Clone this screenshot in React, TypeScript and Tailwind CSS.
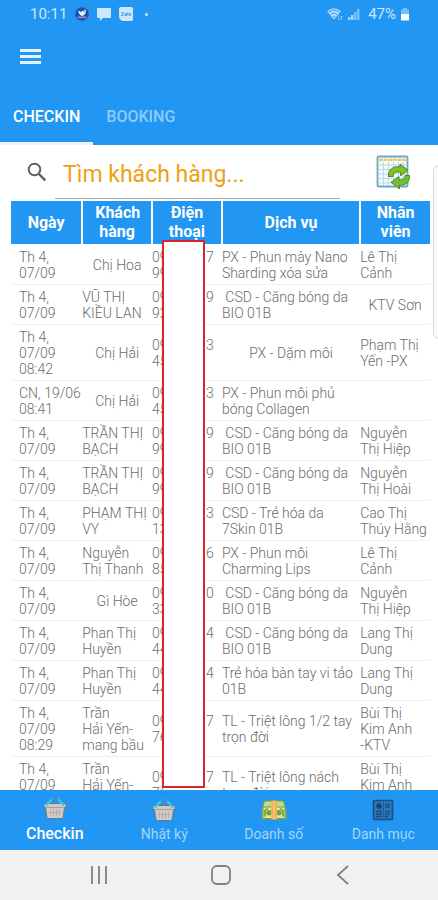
import React, { useState } from "react";
import clsx from "clsx";

interface Visit {
  date: string;
  customer: string;
  phone: string[];
  service: string;
  staff: string;
}

const visits: Visit[] = [
  { date: "Th 4,\n07/09", customer: "Chị Hoa", phone: ["09", "7", "99"], service: "PX - Phun mày Nano\nSharding xóa sửa", staff: "Lê Thị\nCảnh" },
  { date: "Th 4,\n07/09", customer: "VŨ THỊ\nKIỀU LAN", phone: ["09", "9", "92"], service: "\u00a0CSD - Căng bóng da\nBIO 01B", staff: "KTV Sơn" },
  { date: "Th 4,\n07/09\n08:42", customer: "Chị Hải", phone: ["09", "3", "45"], service: "PX - Dặm môi", staff: "Phạm Thị\nYến -PX" },
  { date: "CN, 19/06\n08:41", customer: "Chị Hải", phone: ["09", "3", "45"], service: "PX - Phun môi phủ\nbóng Collagen", staff: "" },
  { date: "Th 4,\n07/09", customer: "TRẦN THỊ\nBẠCH", phone: ["09", "9", "99"], service: "\u00a0CSD - Căng bóng da\nBIO 01B", staff: "Nguyễn\nThị Hiệp" },
  { date: "Th 4,\n07/09", customer: "TRẦN THỊ\nBẠCH", phone: ["09", "9", "99"], service: "\u00a0CSD - Căng bóng da\nBIO 01B", staff: "Nguyễn\nThị Hoài" },
  { date: "Th 4,\n07/09", customer: "PHẠM THỊ\nVY", phone: ["09", "3", "13"], service: "CSD - Trẻ hóa da\n7Skin 01B", staff: "Cao Thị\nThúy Hằng" },
  { date: "Th 4,\n07/09", customer: "Nguyễn\nThị Thanh", phone: ["09", "6", "85"], service: "PX - Phun môi\nCharming Lips", staff: "Lê Thị\nCảnh" },
  { date: "Th 4,\n07/09", customer: "Gì Hòe", phone: ["09", "0", "33"], service: "\u00a0CSD - Căng bóng da\nBIO 01B", staff: "Nguyễn\nThị Hiệp" },
  { date: "Th 4,\n07/09", customer: "Phan Thị\nHuyền", phone: ["09", "4", "44"], service: "\u00a0CSD - Căng bóng da\nBIO 01B", staff: "Lang Thị\nDung" },
  { date: "Th 4,\n07/09", customer: "Phan Thị\nHuyền", phone: ["09", "4", "44"], service: "Trẻ hóa bàn tay vi tảo\n01B", staff: "Lang Thị\nDung" },
  { date: "Th 4,\n07/09\n08:29", customer: "Trần\nHải Yến-\nmang bầu", phone: ["09", "7", "76"], service: "TL - Triệt lông 1/2 tay\ntrọn đời", staff: "Bùi Thị\nKim Anh\n-KTV" },
  { date: "Th 4,\n07/09\n08:29", customer: "Trần\nHải Yến-\nmang bầu", phone: ["09", "7", "76"], service: "TL - Triệt lông nách\ntrọn đời", staff: "Bùi Thị\nKim Anh\n-KTV" },
];

const columns = ["Ngày", "Khách hàng", "Điện thoại", "Dịch vụ", "Nhân viên"];

function StatusBar() {
  return (
    <div className="flex h-7 shrink-0 items-center justify-between pl-[30px] pr-7 text-[#cbe6fd]">
      <div className="flex items-center gap-2">
        <span className="text-[15px] leading-5">10:11</span>
        <svg width="14" height="14" viewBox="0 0 14 14" aria-hidden="true">
          <circle cx="7" cy="7" r="6.8" fill="#1454b8" />
          <path d="M3 3.5l3 1.5 1.5-1.2 1.5 1 2-2.3-.6 4-2.2 2.3H6L4 6.5z" fill="#e8f4ff" />
          <path d="M8.5 3.5l2-1.5v3l-1.5 1z" fill="#f3c73b" />
          <path d="M2.5 10.3h9" stroke="#b98aa5" strokeWidth="1.6" />
        </svg>
        <svg width="14" height="14" viewBox="0 0 14 14" aria-hidden="true">
          <path d="M1 1h12a1 1 0 011 1v8a1 1 0 01-1 1H6l-3 3v-3H1a1 1 0 01-1-1V2a1 1 0 011-1z" fill="currentColor" />
        </svg>
        <svg width="14" height="14" viewBox="0 0 14 14" aria-hidden="true">
          <path d="M2 0h10.500A1.500 1.500 0 0114 1.500v11a1.500 1.500 0 01-1.500 1.500H5c-3 0-5-2-5-5V2a2 2 0 012-2z" fill="currentColor" />
          <path d="M2.500 5.500h2l-2 3h2.200M6 8.500v-2h1.500v2H6M8.800 5.200v3.300M10.200 6.500h1.500v2h-1.500z" fill="none" stroke="#5a9fd8" />
        </svg>
        <span className="ml-1 size-[3px] rounded-full bg-current" />
      </div>
      <div className="flex items-center gap-1">
        <svg width="17" height="14" viewBox="0 0 17 14" fill="none" stroke="currentColor" aria-hidden="true">
          <path d="M.7 4.300a9.500 9.500 0 0112.600 0L7 12z" fill="currentColor" fillOpacity=".35" strokeWidth="1" />
          <path d="M2.800 6.300a6.500 6.500 0 018.400 0M4.800 8.600a3.500 3.500 0 014.400 0" strokeWidth="1.300" />
          <path d="M12 9v4l-1.200-1.200M14.500 13V9l1.200 1.200" strokeOpacity=".6" />
        </svg>
        <svg width="12" height="12" viewBox="0 0 12 12" fill="currentColor" aria-hidden="true">
          <path d="M0 9h2.500v3H0zM3 7h2.500v5H3z" opacity=".8" />
          <path d="M6 4h2.500v8H6zM9 1h2.500v11H9z" opacity=".55" />
        </svg>
        <span className="ml-1 text-[15px] leading-5">47%</span>
        <svg width="10" height="13" viewBox="0 0 10 13" fill="currentColor" aria-hidden="true">
          <path d="M3 0h4v1.500h2V6H1V1.500h2z" opacity=".5" />
          <path d="M1 6h8v6.500H1z" fill="#fff" />
        </svg>
      </div>
    </div>
  );
}

function CalendarSyncIcon() {
  return (
    <svg width="34" height="34" viewBox="0 0 34 34" aria-hidden="true">
      <rect x="1.500" y="1.500" width="30" height="30" rx="1" fill="#f3fafe" stroke="#6fa9bf" strokeWidth="1.800" />
      <path d="M3 4.800h27" stroke="#ecc873" strokeWidth="2.600" strokeDasharray="4 .6" />
      <path d="M3 10h27M3 14.500h27M3 19h27M3 23.500h27M3 28h27M7.500 7v23M12.500 7v23M17.500 7v23M22.500 7v23M27 7v23" stroke="#b9d9e8" />
      <path d="M12.500 21.500c-.5-7 5-11 11.500-9.500V9l8 6.300-7.500 5.500v-3.500c-4-1-7.500.5-7.500 4.200z" fill="#7fc02c" stroke="#4d8a1b" />
      <path d="M33.500 20.500c.5 6.500-4 10.200-10 9.700V34l-8.500-6.800 8-5.700v3.300c3.500.6 5.500-1 6-4.300z" fill="#76bb3a" stroke="#4d8a1b" />
    </svg>
  );
}

function BasketIcon() {
  return (
    <svg width="24" height="24" viewBox="0 0 24 24" aria-hidden="true">
      <path d="M1 7.500h22v4h-1.500l-1.300 9.500a1.800 1.800 0 01-1.800 1.500H5.600A1.800 1.800 0 013.800 21L2.500 11.500H1z" fill="#cfcbc8" stroke="#75777e" />
      <path d="M3.500 11.500h17" stroke="#a5a19e" />
      <path d="M7.500 13.500v6M10.500 13.500v6.500M13.500 13.500v6.500M16.500 13.500v6M6 16.500h12" stroke="#b3aeaa" />
      <path d="M9.500 2.500L3.500 9M14.500 2.500l6 6.500" stroke="#45c6f0" strokeWidth="2.400" strokeLinecap="round" />
      <path d="M8.500 3.300c2-1.800 5-1.800 7 0" fill="none" stroke="#4c86b5" strokeWidth="1.600" />
    </svg>
  );
}

function MoneyIcon() {
  return (
    <svg width="26" height="24" viewBox="0 0 26 24" aria-hidden="true">
      <path d="M3.500 3h19l2.500 9v9H1v-9z" fill="#c4dc86" stroke="#79a349" />
      <rect x="2" y="9" width="22" height="11.500" rx="1" fill="#dcea9d" stroke="#6d9d40" />
      <path d="M4 18.500v-6l3-2M22 18.500v-6l-3-2" fill="none" stroke="#5f9b3e" strokeWidth="1.500" />
      <circle cx="8" cy="14.800" r="2.700" fill="#6da545" />
      <circle cx="18" cy="14.800" r="2.700" fill="#6da545" />
      <path d="M10.500 2.500h5l.5 7v12h-6v-12z" fill="#f5b04e" />
      <path d="M13 3v18" stroke="#fbd79a" />
    </svg>
  );
}

function CatalogIcon() {
  return (
    <svg width="24" height="24" viewBox="0 0 24 24" fill="none" stroke="#19507f" aria-hidden="true">
      <rect x="2.500" y="2.500" width="19" height="19" rx="1" fill="#2a78bb" strokeWidth="1.600" />
      <circle cx="8" cy="8" r="2.500" fill="#19456f" />
      <path d="M5 13.500h6M5 16h6M5 18.500h6M14 6.500h5M14 9h5M14 13.500h5M14 16h5M14 18.500h3" strokeWidth="1.400" />
      <path d="M12.500 4v16" strokeOpacity=".6" />
    </svg>
  );
}

const menu = [
  { label: "Checkin", icon: <BasketIcon /> },
  { label: "Nhật ký", icon: <BasketIcon /> },
  { label: "Doanh số", icon: <MoneyIcon /> },
  { label: "Danh mục", icon: <CatalogIcon /> },
];

function Cell({ text }: { text: string }) {
  return (
    <td
      className={clsx(
        "whitespace-pre-line px-0 pt-1 pb-[3px] align-middle",
        text.includes("\n") ? "text-left" : "text-center"
      )}
    >
      {text}
    </td>
  );
}

function VisitTable() {
  return (
    <table className="w-full table-fixed border-collapse">
      <colgroup>
        <col className="w-[17%]" />
        <col className="w-1/6" />
        <col className="w-1/6" />
        <col />
        <col className="w-1/6" />
      </colgroup>
      <thead>
        <tr className="h-[43px] border-b border-white bg-[#2196f3] text-base leading-[19px] font-bold text-white">
          {columns.map((name) => (
            <th key={name} scope="col" className="border-r-2 border-white px-3 last:border-r-0">
              {name}
            </th>
          ))}
        </tr>
      </thead>
      <tbody className="text-sm leading-4 font-light text-[#6c6c6c]">
        {visits.map((v, i) => (
          <tr key={i} className="border-b border-[#f1f1f1]">
            <td className="whitespace-pre-line pt-1 pb-[3px] pl-2 align-middle">{v.date}</td>
            <Cell text={v.customer} />
            <td className="pr-2 pt-1 pb-[3px] align-middle">
              <div className="flex justify-between">
                <span>{v.phone[0]}</span>
                <span>{v.phone[1]}</span>
              </div>
              <div>{v.phone[2]}</div>
            </td>
            <Cell text={v.service} />
            <Cell text={v.staff} />
          </tr>
        ))}
      </tbody>
    </table>
  );
}

function App() {
  const [tab, setTab] = useState("CHECKIN");
  const [page, setPage] = useState("Checkin");

  return (
    <div className="flex h-screen flex-col overflow-hidden bg-white font-['Roboto',sans-serif]">
      <header className="shrink-0 bg-[#2196f3]">
        <StatusBar />
        <div className="flex h-14 items-center pl-5">
          <button aria-label="Menu" className="flex w-[21px] flex-col gap-[3px]">
            <span className="h-[3px] bg-[#e3f2fd]" />
            <span className="h-[3px] bg-[#e3f2fd]" />
            <span className="h-[3px] bg-[#e3f2fd]" />
          </button>
        </div>
        <div className="flex h-[61px]" role="tablist">
          {["CHECKIN", "BOOKING"].map((name) => (
            <button
              key={name}
              role="tab"
              aria-selected={tab === name}
              onClick={() => setTab(name)}
              className={clsx(
                "border-b-[3px] px-[13px] pt-2 text-base font-medium",
                tab === name ? "border-[#f3f3f3] text-white" : "border-transparent text-[#90caf9]"
              )}
            >
              {name}
            </button>
          ))}
        </div>
      </header>

      <main className="relative min-h-0 flex-1 overflow-hidden pr-2 pl-[11px]">
        <div className="mb-0.5 flex h-[54px] items-center justify-between pr-5 pl-4">
          <label htmlFor="search" aria-label="Tìm khách hàng" className="text-[#606060]">
            <svg width="20" height="20" viewBox="0 0 20 20" fill="none" stroke="currentColor" strokeWidth="2" aria-hidden="true">
              <circle cx="7.500" cy="7.500" r="5.800" />
              <path d="M11.800 11.800l6.500 6.500" strokeWidth="2.400" />
            </svg>
          </label>
          <input
            id="search"
            type="text"
            placeholder="Tìm khách hàng..."
            className="mr-9 ml-2 h-[54px] min-w-0 flex-1 border-b border-[#aaa] pt-1.5 pl-2 text-[23px] text-[#eda112] outline-none placeholder:text-[#eda112]"
          />
          <button aria-label="Làm mới">
            <CalendarSyncIcon />
          </button>
        </div>
        <VisitTable />
        {/* covers the middle digits of the phone numbers */}
        <div className="absolute top-[95px] bottom-[2px] left-[162px] w-[43px] border-2 border-[#d9252b] bg-white" />
        <div className="absolute top-5 -right-1 h-[174px] w-[9px] rounded-l-md border border-[#d8d8d8] bg-[#fafafa]" />
      </main>

      <nav className="flex h-[60px] shrink-0 bg-[#2196f3]">
        {menu.map(({ label, icon }) => (
          <button
            key={label}
            onClick={() => setPage(label)}
            className={clsx(
              "flex flex-1 flex-col items-center gap-0.5",
              page === label
                ? "pt-1.5 text-base font-medium text-white"
                : "pt-2 text-sm text-[#a6d5fa]"
            )}
          >
            {icon}
            {label}
          </button>
        ))}
      </nav>

      <div className="flex h-[50px] shrink-0 items-center bg-[#f1f1f1] pr-[34px] pl-[38px] text-[#808080]">
        <button aria-label="Ứng dụng gần đây" className="flex flex-1 justify-center">
          <svg width="18" height="20" viewBox="0 0 18 20" stroke="currentColor" strokeWidth="1.800" aria-hidden="true">
            <path d="M2 1v18M9 1v18M16 1v18" />
          </svg>
        </button>
        <button aria-label="Trang chủ" className="flex flex-1 justify-center">
          <svg width="20" height="20" viewBox="0 0 20 20" fill="none" stroke="currentColor" strokeWidth="1.800" aria-hidden="true">
            <rect x="1" y="1" width="18" height="18" rx="5" />
          </svg>
        </button>
        <button aria-label="Quay lại" className="flex flex-1 justify-center">
          <svg width="14" height="20" viewBox="0 0 14 20" fill="none" stroke="currentColor" strokeWidth="1.800" aria-hidden="true">
            <path d="M12 1L2 10l10 9" />
          </svg>
        </button>
      </div>
    </div>
  );
}

export default App;
